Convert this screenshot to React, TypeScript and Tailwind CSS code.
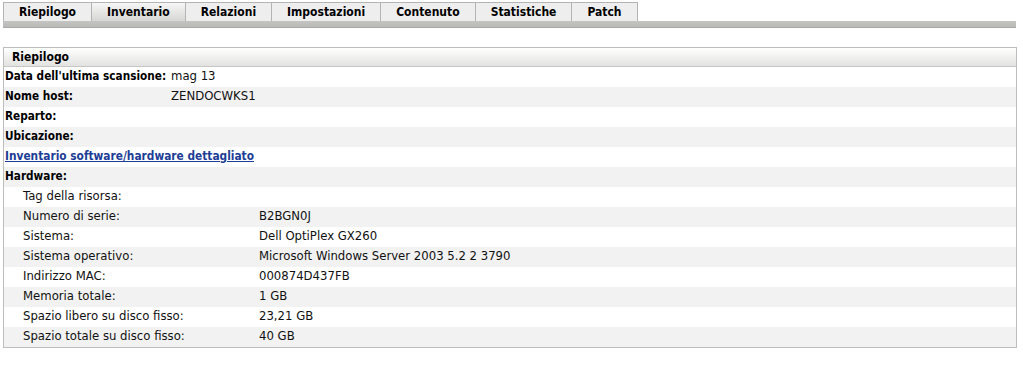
import React from "react";

const tabs = ["Riepilogo", "Inventario", "Relazioni", "Impostazioni", "Contenuto", "Statistiche", "Patch"];

type Row = { label: string; value?: string; kind: "top" | "link" | "sub" };

const rows: Row[] = [
  { label: "Data dell'ultima scansione:", value: "mag 13", kind: "top" },
  { label: "Nome host:", value: "ZENDOCWKS1", kind: "top" },
  { label: "Reparto:", kind: "top" },
  { label: "Ubicazione:", kind: "top" },
  { label: "Inventario software/hardware dettagliato", kind: "link" },
  { label: "Hardware:", kind: "top" },
  { label: "Tag della risorsa:", kind: "sub" },
  { label: "Numero di serie:", value: "B2BGN0J", kind: "sub" },
  { label: "Sistema:", value: "Dell OptiPlex GX260", kind: "sub" },
  { label: "Sistema operativo:", value: "Microsoft Windows Server 2003 5.2 2 3790", kind: "sub" },
  { label: "Indirizzo MAC:", value: "000874D437FB", kind: "sub" },
  { label: "Memoria totale:", value: "1 GB", kind: "sub" },
  { label: "Spazio libero su disco fisso:", value: "23,21 GB", kind: "sub" },
  { label: "Spazio totale su disco fisso:", value: "40 GB", kind: "sub" },
];

const boldFont = "font-['DejaVu_Sans_Condensed','DejaVu_Sans',sans-serif] font-bold [font-stretch:condensed]";
const regFont = "font-['DejaVu_Sans',sans-serif]";

export default function App() {
  return (
    <div className="w-[1023px] h-[365px] bg-white px-[3px] pt-[2px]">
      <div className="w-[1013px]">
        <div className="flex h-[19px]">
          {tabs.map((t, i) => (
            <div
              key={t}
              className={
                "h-[19px] px-[15px] flex items-center border-t border-r border-[#b4b4b4] text-[12px] text-black leading-none " +
                boldFont +
                (i === 0 ? " border-l" : "") +
                (i === 1
                  ? " bg-gradient-to-b from-[#f6f6f6] to-[#d6d6d4]"
                  : " bg-[#eeeeee]")
              }
            >
              {t}
            </div>
          ))}
        </div>
        <div className="h-[7px] bg-gradient-to-b from-[#c4c4c2] to-[#b9b9b7] border-b border-[#a9a9a9]" />
      </div>

      <div className="mt-[19px] w-[1014px] border border-[#bdbdbd]">
        <div
          className={
            "h-[19px] flex items-center pl-[8px] border-b border-[#c6c6c6] bg-gradient-to-b from-[#ffffff] to-[#e2e2e0] text-[12px] text-black leading-none " +
            boldFont
          }
        >
          Riepilogo
        </div>
        {rows.map((r, i) => (
          <div
            key={r.label}
            className={
              "h-[20px] flex items-center leading-none " + (i % 2 === 0 ? "bg-white" : "bg-[#f2f2f2]")
            }
          >
            {r.kind === "top" && (
              <>
                <div className={"w-[167px] shrink-0 pl-[1px] text-[11.7px] text-black whitespace-nowrap " + boldFont}>
                  {r.label}
                </div>
                {r.value && (
                  <div className={"text-[11.7px] text-[#111] whitespace-nowrap " + regFont}>{r.value}</div>
                )}
              </>
            )}
            {r.kind === "link" && (
              <a
                href="#"
                className={"pl-[1px] text-[11.8px] text-[#1d3d96] underline whitespace-nowrap " + boldFont}
              >
                {r.label}
              </a>
            )}
            {r.kind === "sub" && (
              <>
                <div className={"w-[255px] shrink-0 pl-[19px] text-[11.7px] text-[#111] whitespace-nowrap " + regFont}>
                  {r.label}
                </div>
                {r.value && (
                  <div className={"text-[11.7px] text-[#111] whitespace-nowrap " + regFont}>{r.value}</div>
                )}
              </>
            )}
          </div>
        ))}
      </div>
    </div>
  );
}
